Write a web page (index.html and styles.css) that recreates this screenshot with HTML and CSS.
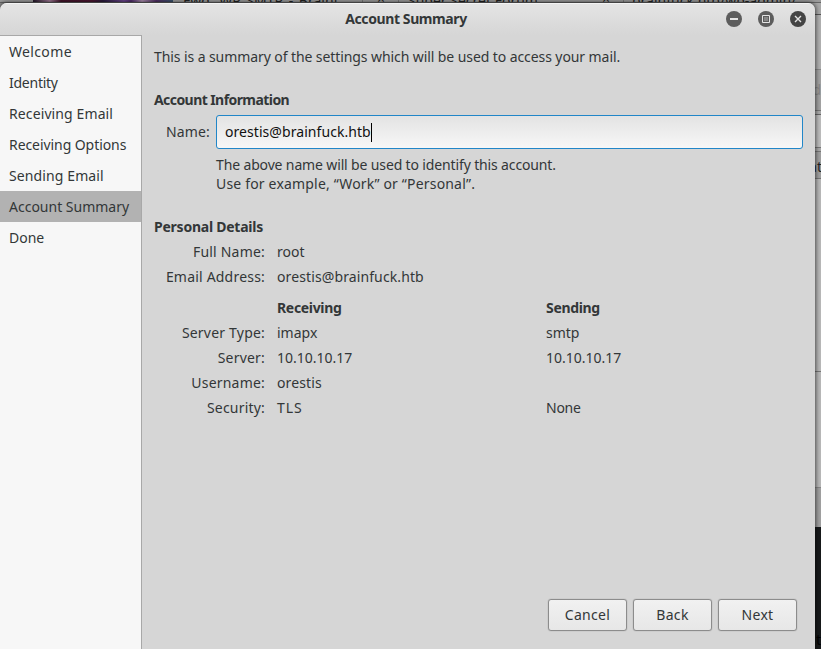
FILE: index.html
```html
<!DOCTYPE html>
<html lang="en">
<head>
<meta charset="utf-8">
<title>Account Summary</title>
<link rel="stylesheet" href="styles.css">
</head>
<body>
<div class="desktop">
  <div class="behind" aria-hidden="true">
    <div class="tabs">
      <i class="picture"></i>
      <span class="tab tab-a">Fwd: WP SMTP - Brainf</span>
      <i class="rule rule-a"></i><span class="tab tab-x">×</span><i class="rule rule-b"></i>
      <span class="tab tab-b">Super Secret Forum</span>
      <span class="tab tab-y">×</span><i class="rule rule-c"></i>
      <span class="tab tab-c">brainfuck.htb/wp-admin/</span>
    </div>
    <div class="edge"><span class="edge-d">d</span><span class="edge-t">at</span><span class="edge-b">t</span></div>
  </div>
  <main class="window">
    <header class="titlebar">
      <h1>Account Summary</h1>
      <div class="controls">
        <svg width="16" height="16" viewBox="0 0 16 16"><circle cx="8" cy="8" r="8" fill="#5d5d5d"/><path d="M4 7h8v2H4z" fill="#e4e4e4"/></svg>
        <svg width="16" height="16" viewBox="0 0 16 16"><circle cx="8" cy="8" r="8" fill="#5d5d5d"/><path d="M4.5 4.5h7v7h-7z" fill="none" stroke="#e4e4e4"/><path d="M6 6h4v4H6z" fill="#868686"/></svg>
        <svg width="16" height="16" viewBox="0 0 16 16"><circle cx="8" cy="8" r="8" fill="#444"/><path d="M5 5l6 6M11 5l-6 6" stroke="#e4e4e4" stroke-width="1.4"/></svg>
      </div>
    </header>
    <div class="body">
      <nav class="steps">
        <div class="wide">Welcome</div><div class="tight">Identity</div><div class="loose">Receiving Email</div><div class="snug">Receiving Options</div><div class="loose">Sending Email</div><div class="current">Account Summary</div><div>Done</div>
      </nav>
      <section class="page">
        <p class="intro">This is a summary of the settings which will be used to access your mail.</p>
        <h2 class="h-info">Account Information</h2>
        <div class="name-row"><label>Name:</label><div class="entry"><span>orestis@brainfuck.htb</span><i class="caret"></i></div></div>
        <p class="hint"><span class="hint-a">The above name will be used to identify this account.</span><br><span class="hint-b">Use for example, “Work” or “Personal”.</span></p>
        <h2 class="h-details">Personal Details</h2>
        <div class="grid">
          <span class="key">Full Name:</span><span>root</span><span></span>
          <span class="key">Email Address:</span><span class="loose">orestis@brainfuck.htb</span><span></span>
        </div>
        <div class="grid servers">
          <span></span><b>Receiving</b><b>Sending</b>
          <span class="key">Server Type:</span><span>imapx</span><span>smtp</span>
          <span class="key">Server:</span><span>10.10.10.17</span><span>10.10.10.17</span>
          <span class="key">Username:</span><span class="loose">orestis</span><span></span>
          <span class="key">Security:</span><span class="tls">TLS</span><span class="tight">None</span>
        </div>
        <footer class="actions"><button>Cancel</button><button>Back</button><button>Next</button></footer>
      </section>
    </div>
  </main>
</div>
</body>
</html>
```
FILE: styles.css
```css
* { box-sizing: border-box; }
body { margin: 0; overflow: hidden; font: 14px/19px "Noto Sans", sans-serif; color: #333738; }
h1, h2, p { margin: 0; font-size: inherit; line-height: inherit; }
.desktop { position: relative; width: 821px; height: 649px; padding-top: 3px; background: #999; overflow: hidden; }
.behind { position: absolute; inset: 0; }
.tabs { position: absolute; left: 0; top: 0; width: 821px; height: 3px; overflow: hidden; border-bottom: 1px solid #666; background: #9b9b9b; }
.picture { position: absolute; left: 33px; top: 0; width: 140px; height: 2px; background: linear-gradient(90deg, #241729, #9d7893 12%, #42152a 20%, #4b1730 42%, #291b3c 50%, #69458a 65%, #4e2b68 70%, #a88cab 78%, #513064 88%, #39536c); }
.tab { position: absolute; top: -6px; font-size: 14px; line-height: 14px; color: #222; white-space: nowrap; }
.tab-a { left: 183px; word-spacing: 2px; } .tab-x { left: 377px; top: -8px; } .tab-b { left: 408px; }
.tab-y { left: 602px; top: -8px; } .tab-c { left: 632px; }
.rule { position: absolute; top: 0; width: 1px; height: 3px; background: #777; }
.rule-a { left: 362px; } .rule-b { left: 398px; } .rule-c { left: 623px; }
.edge { position: absolute; left: 811px; top: 3px; width: 10px; height: 646px; color: #222; overflow: hidden;
  background: linear-gradient(#a8a8a8 0 11px, #555 11px 12px, #b0b0b0 12px 66px, #888 66px 67px, #a3a3a3 67px 107px, #777 107px 108px, #aaa 108px 111px, #666 111px 112px, #bcbcbc 112px 144px, #777 144px 145px, #aaa 145px 148px, #777 148px 149px, #a0a0a0 149px 175px, #777 175px 176px, #b8b8b8 176px 368px, #777 368px 369px, #b8b8b8 369px 484px, #888 484px 485px, #a0a0a0 485px 524px, #17191a 524px); }
.edge span { position: absolute; right: 0; }
.edge-d { top: 77px; color: #888; } .edge .edge-t { top: 154px; right: -1px; } .edge-b { top: 627px; color: #000; }
.window { position: relative; width: 815px; height: 646px; border-radius: 7px 7px 0 0; background: #d6d6d6; box-shadow: 0 0 4px 1px rgba(0,0,0,.6); overflow: hidden; display: flex; flex-direction: column; }
.titlebar { height: 32px; flex: none; position: relative; background: linear-gradient(#e4e4e4, #d6d6d6); border-top: 1px solid #f3f3f3; }
.titlebar h1 { margin-top: 5px; text-align: center; padding-right: 3px; letter-spacing: -.4px; }
.controls { position: absolute; right: 9px; top: 7px; display: flex; gap: 16px; }
svg { display: block; }
.body { flex: 1; display: flex; }
.steps { width: 142px; background: #f7f7f7; border-top: 1px solid #a8a8a8; border-right: 1px solid #a8a8a8; }
.steps div { height: 31px; line-height: 31px; padding-left: 9px; white-space: nowrap; }
.steps .current { background: #b2b2b2; }
.wide { letter-spacing: .35px; }
.loose { letter-spacing: .11px; }
.snug { letter-spacing: -.07px; }
.tight { letter-spacing: -.25px; }
.tls { letter-spacing: .9px; }
.page { flex: 1; padding: 12px 12px 18px; display: flex; flex-direction: column; white-space: nowrap; }
.intro { letter-spacing: -.085px; }
.h-info { margin-top: 24px; letter-spacing: -.57px; }
.name-row { display: flex; margin-top: 6px; line-height: 34px; }
.name-row label { width: 62px; padding-right: 6px; text-align: right; letter-spacing: .15px; }
.entry { flex: 1; height: 34px; display: flex; align-items: center; padding-left: 8px; line-height: 20px; border: 1px solid #2186c8; border-radius: 3px; background: linear-gradient(#e3e3e3, #f7f7f7); color: #111; letter-spacing: .06px; }
.caret { width: 1px; height: 19px; background: #000; }
.hint { margin: 6px 0 0 62px; }
.hint-a { letter-spacing: -.14px; }
.hint-b { letter-spacing: .18px; }
.h-details { margin-top: 24px; letter-spacing: -.24px; }
.grid { display: grid; grid-template-columns: 111px 257px 1fr; column-gap: 12px; grid-auto-rows: 25px; line-height: 25px; margin-top: 3px; }
.grid b { letter-spacing: -.33px; }
.servers { margin-top: 6px; }
.key { text-align: right; letter-spacing: .2px; }
.actions { margin-top: auto; margin-right: 6px; display: flex; justify-content: flex-end; gap: 6px; }
button { width: 79px; height: 32px; padding: 0 0 2px; font: inherit; letter-spacing: .3px; color: #333738; border: 1px solid #8c8c8c; border-radius: 3px; background: linear-gradient(#f1f1f1, #e7e7e7); box-shadow: 0 0 1px rgba(0,0,0,.4); }
```
